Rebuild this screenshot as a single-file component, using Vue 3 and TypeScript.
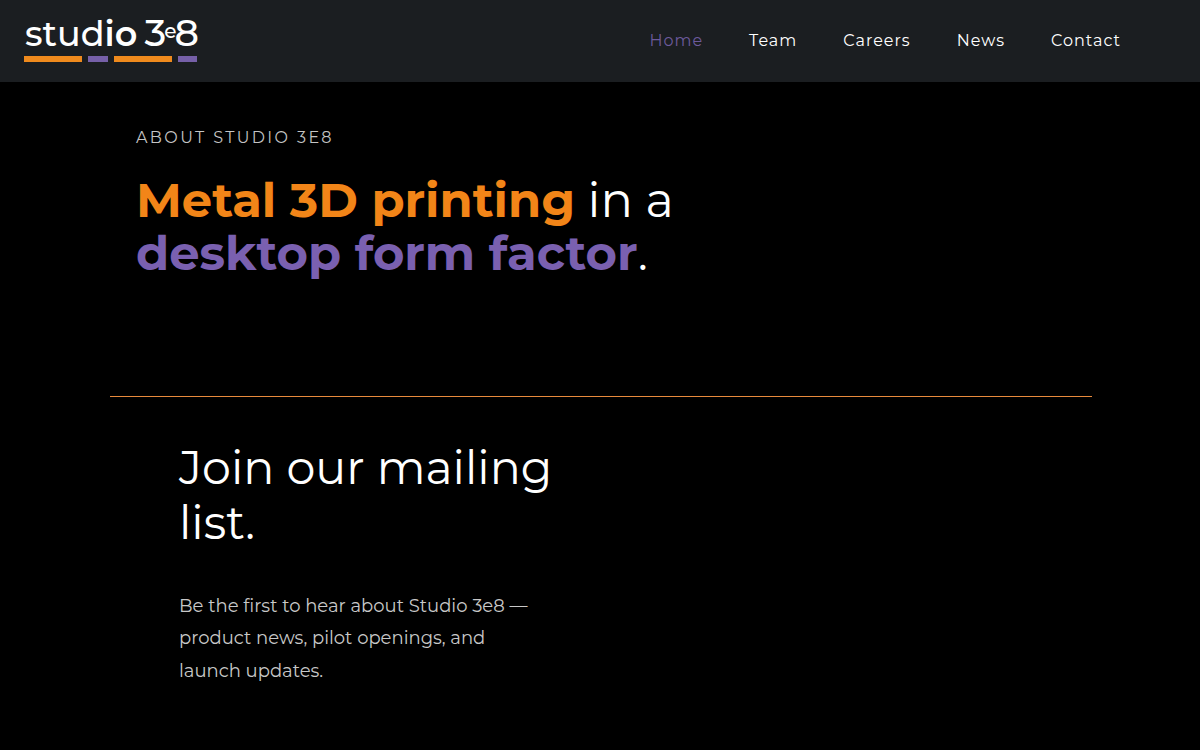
<script setup lang="ts">
interface NavItem {
  label: string
  href: string
  current?: boolean
}

const navItems: NavItem[] = [
  { label: 'Home', href: '#home', current: true },
  { label: 'Team', href: '#team' },
  { label: 'Careers', href: '#careers' },
  { label: 'News', href: '#news' },
  { label: 'Contact', href: '#contact' },
]
</script>

<template>
  <header class="site-header">
    <a class="logo" href="#home">
      <span class="wordmark"><span>stud<b>io</b></span><span class="number">3<small>e</small>8</span></span>
      <svg class="logo-bars" viewBox="0 0 173 6" aria-hidden="true">
        <rect width="58" height="6" fill="#ef8a1d" />
        <rect x="64" width="20" height="6" fill="#7660a8" />
        <rect x="90" width="58" height="6" fill="#ef8a1d" />
        <rect x="154" width="19" height="6" fill="#7660a8" />
      </svg>
    </a>
    <nav class="site-nav" aria-label="Main">
      <a
        v-for="item in navItems"
        :key="item.label"
        :href="item.href"
        :class="{ current: item.current }"
        :aria-current="item.current ? 'page' : undefined"
      >{{ item.label }}</a>
    </nav>
  </header>
  <main>
    <section class="hero">
      <p class="eyebrow">About Studio 3e8</p>
      <h1>
        <strong class="orange">Metal 3D printing</strong> in a<br />
        <strong class="purple">desktop form factor</strong>.
      </h1>
    </section>
    <hr class="divider" />
    <section class="mailing">
      <h2>Join our mailing list.</h2>
      <p>Be the first to hear about Studio 3e8 — product news, pilot openings, and launch updates.</p>
    </section>
  </main>
</template>

<style>
body {
  margin: 0;
  background: #000;
  color: #fff;
  font-family: Montserrat, Inter, "Open Sans", sans-serif;
}
</style>

<style scoped>
.site-header {
  display: flex;
  align-items: center;
  justify-content: space-between;
  box-sizing: border-box;
  min-height: 82px;
  padding: 0 79px 0 24px;
  background: #1b1e21;
}

.logo {
  display: flex;
  flex-direction: column;
  gap: 4px;
  width: 173px;
  padding-bottom: 6px;
  color: #fff;
  text-decoration: none;
}

.wordmark {
  display: flex;
  align-items: baseline;
  justify-content: space-between;
  padding: 0 0 0 1px;
  font-size: 35px;
  font-weight: 500;
  line-height: 36px;
}

.wordmark b {
  font-weight: 600;
}

.number {
  font-size: 38px;
  letter-spacing: -2px;
}

.number small {
  font-size: 20px;
  line-height: 20px;
  vertical-align: 8px;
}

.logo-bars {
  display: block;
  width: 100%;
}

.site-nav {
  display: flex;
  gap: 46px;
}

.site-nav a {
  color: #fff;
  font-size: 16px;
  line-height: 24px;
  letter-spacing: 1px;
  text-decoration: none;
}

.site-nav .current {
  color: #6d5a9c;
}

.hero {
  padding: 44px 136px 116px;
}

.eyebrow {
  margin: 0;
  color: #c4c4c4;
  font-size: 16px;
  font-weight: 400;
  line-height: 24px;
  letter-spacing: 0.15em;
  text-transform: uppercase;
}

h1 {
  margin: 24px 0 0;
  font-size: 48px;
  font-weight: 400;
  line-height: 53px;
}

h1 strong {
  font-weight: 700;
}

.orange {
  color: #f28518;
}

.purple {
  color: #7a60b0;
}

.divider {
  height: 0;
  margin: 0 108px 0 110px;
  border: 0;
  border-top: 1px solid #e88a3c;
}

.mailing {
  max-width: 400px;
  padding: 43px 24px 64px 179px;
}

h2 {
  margin: 0;
  font-size: 46px;
  font-weight: 400;
  line-height: 55px;
}

.mailing p {
  max-width: 370px;
  margin: 40px 0 0;
  color: #c8c8c8;
  font-size: 18px;
  line-height: 1.8;
}
</style>
